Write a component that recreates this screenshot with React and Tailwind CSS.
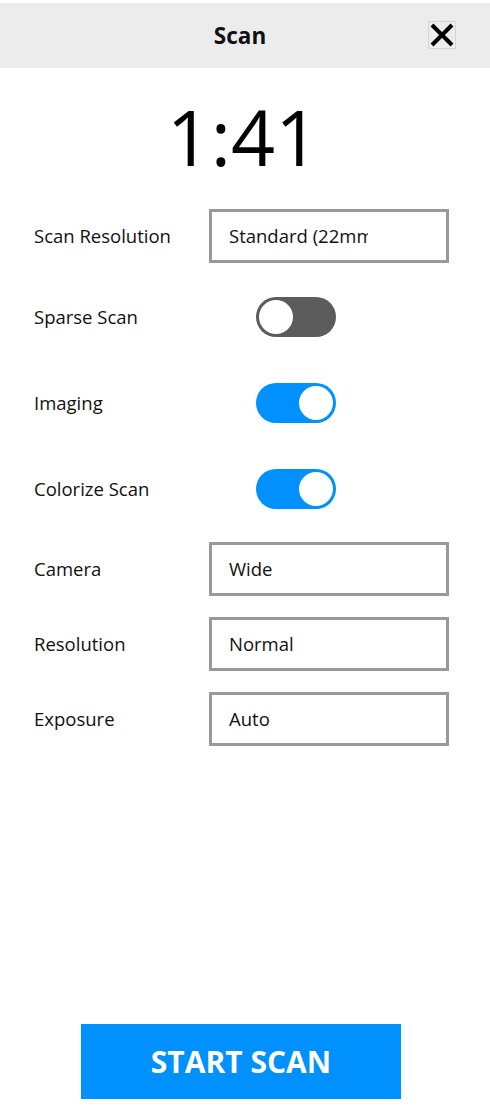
const font = { fontFamily: '"Open Sans", "Noto Sans", sans-serif' };

const Box = ({ value }) => (
  <div className="w-[240px] h-[54px] border-[3px] border-[#999999] flex items-center pl-[17px]">
    <span className="w-[139px] overflow-hidden whitespace-nowrap text-[18.5px] text-[#111]">{value}</span>
  </div>
);

const Toggle = ({ on }) => (
  <div
    className={
      "w-[80px] h-[40px] rounded-full flex items-center px-[3px] " +
      (on ? "bg-[#0091ff] justify-end" : "bg-[#5c5c5c] justify-start")
    }
  >
    <div className="w-[34px] h-[34px] rounded-full bg-white" />
  </div>
);

const Row = ({ label, className, children }) => (
  <div className={"flex items-center " + className}>
    <div className="w-[175px] text-[18.5px] text-[#111]">{label}</div>
    {children}
  </div>
);

export default function App() {
  return (
    <div className="h-screen flex flex-col bg-white pt-[3px]" style={font}>
      <div className="h-[65px] bg-[#ececec] flex items-center justify-center pr-[10px] relative">
        <span className="text-[22.5px] font-bold text-[#111]">Scan</span>
        <button className="absolute left-[428px] top-[18px] w-[28px] h-[28px] border border-[#d4d4d4] flex items-center justify-center">
          <svg width="24" height="24" viewBox="0 0 24 24">
            <path d="M2 2 L22 22 M22 2 L2 22" stroke="#000" strokeWidth="4" />
          </svg>
        </button>
      </div>

      <div className="mt-[30px] text-center pr-[4px] text-[77px] leading-none text-black">1:41</div>

      <div className="pl-[34px] flex flex-col">
        <Row label="Scan Resolution" className="mt-[34px]">
          <Box value="Standard (22mm)" />
        </Row>
        <Row label="Sparse Scan" className="mt-[34px]">
          <div className="ml-[47px]"><Toggle on={false} /></div>
        </Row>
        <Row label="Imaging" className="mt-[46px]">
          <div className="ml-[47px]"><Toggle on /></div>
        </Row>
        <Row label="Colorize Scan" className="mt-[46px]">
          <div className="ml-[47px]"><Toggle on /></div>
        </Row>
        <Row label="Camera" className="mt-[33px]">
          <Box value="Wide" />
        </Row>
        <Row label="Resolution" className="mt-[21px]">
          <Box value="Normal" />
        </Row>
        <Row label="Exposure" className="mt-[21px]">
          <Box value="Auto" />
        </Row>
      </div>

      <div className="mt-auto mb-[12px] pl-[81px] flex">
        <button className="w-[320px] h-[75px] bg-[#0091ff] text-white text-[30px] font-bold">
          START SCAN
        </button>
      </div>
    </div>
  );
}
